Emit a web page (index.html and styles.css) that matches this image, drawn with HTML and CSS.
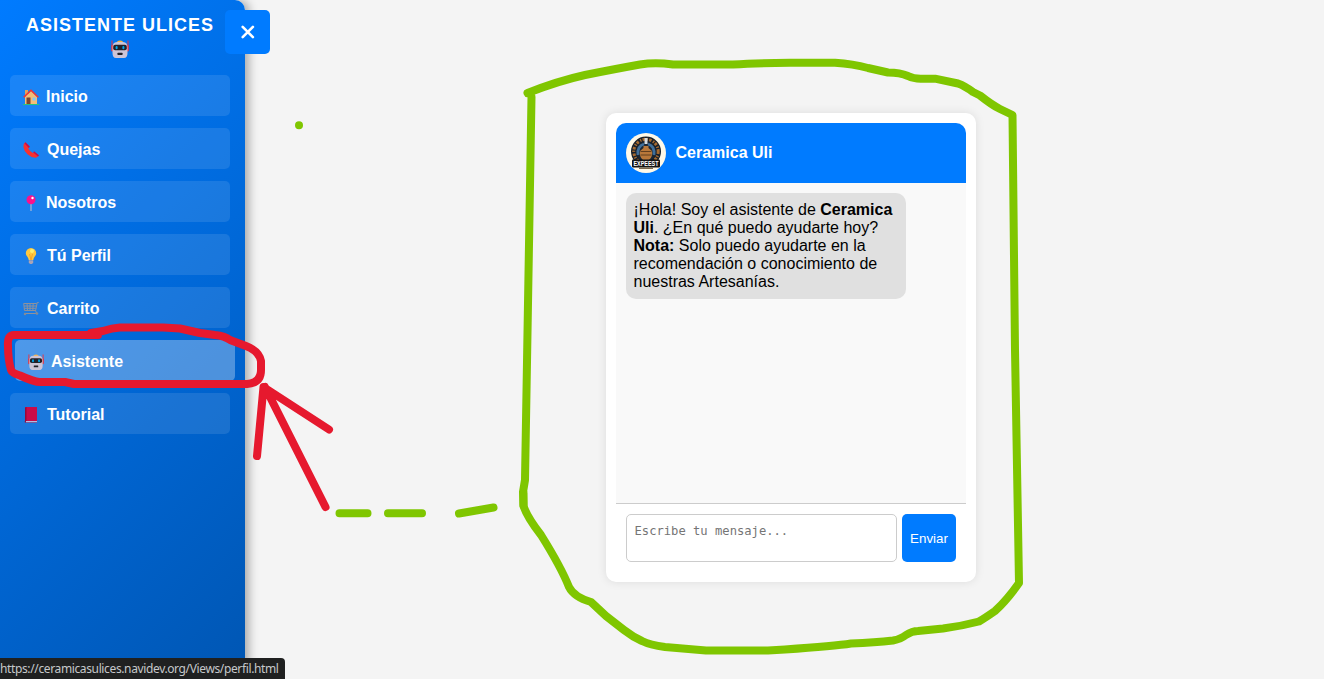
FILE: index.html
```html
<!DOCTYPE html>
<html lang="es">
<head>
<meta charset="utf-8">
<title>Asistente Ulices</title>
<link rel="stylesheet" href="styles.css">
</head>
<body>
<svg class="defs" width="0" height="0">
  <symbol id="robot" viewBox="0 0 18 18">
    <path d="M1 .5v6M17 .5v6" stroke="#f0303c" stroke-width="1"/>
    <rect x=".2" y="5" width="2" height="6.500" rx="1" fill="#e8353f"/><rect x="15.800" y="5" width="2" height="6.500" rx="1" fill="#e8353f"/>
    <path d="M6 2.500Q6 .5 9 .5t3 2z" fill="#f9b23c"/>
    <path d="M1.500 8Q1.300 2 6 2h6q4.700 0 4.500 6v5q0 5-3.500 5H5q-3.500 0-3.500-5z" fill="#cdc4d6"/>
    <rect x="2.200" y="4.800" width="13.600" height="5.400" rx="2" fill="#222028"/>
    <rect x="4.600" y="6" width="2" height="3.200" rx="1" fill="#00a6ed"/><rect x="11.400" y="6" width="2" height="3.200" rx="1" fill="#00a6ed"/>
    <rect x="6.500" y="12.800" width="5" height="2.200" rx=".5" fill="#222028"/>
  </symbol>
</svg>

<aside class="sidebar">
  <h2 class="title">ASISTENTE ULICES <svg class="title-icon"><use href="#robot"/></svg></h2>
  <nav class="menu">
    <a class="item"><svg class="icon" viewBox="0 0 16 16"><path d="M2 1h3v6H2z" fill="#e3a35a"/><path d="M2 8l6-6 6 6v7H2z" fill="#f3bd78"/><path d="M0 15h16v1H0z" fill="#26c281"/><path d="M.7 8.300 8 1.300l7.300 7" fill="none" stroke="#f8312f" stroke-width="1.500"/><path d="M3.500 8.500h4V15h-4z" fill="#7d4533"/><path d="M9.500 8.500h3v3h-3z" fill="#82c9f5"/></svg>Inicio</a>
    <a class="item item-wide"><svg class="icon" viewBox="0 0 16 16"><path d="M2.200 .3Q.2 1.500 .4 5 1 9 4.500 12.300 8.500 16 13 15.800L15.800 13.800 11.500 10 9.800 11Q6.500 9.200 5.200 6.300L6.500 5z" fill="#f8312f"/><path d="M2.500 .3 6.800 4.600 5.900 5.900 1.600 1.500zM11 9.300 16 13.300 15 14.500 10.300 10.600z" fill="#ca0b4a"/></svg>Quejas</a>
    <a class="item"><svg class="icon" viewBox="0 0 16 16"><path d="M7.500 8h1v8h-1z" fill="#c5bfcc"/><circle cx="8" cy="4.700" r="4.500" fill="#fc108b"/><circle cx="9.500" cy="3" r="1.200" fill="#fff"/></svg>Nosotros</a>
    <a class="item item-wide"><svg class="icon" viewBox="0 0 16 16"><path d="M8 0a5.200 5.200 0 0 0-5.200 5.200C2.800 8 5.500 9 5.700 12h4.600c.2-3 2.900-4 2.900-6.800A5.200 5.200 0 0 0 8 0z" fill="#ffc83d"/><path d="M6.500 6 8 12l1.500-6" fill="none" stroke="#f59b1f" stroke-width=".8"/><circle cx="9" cy="3" r="2" fill="#fff06b"/><path d="M5.800 12.300h4.400v2.500L9 16H7l-1.200-1.200z" fill="#aaa3b5"/></svg>Tú Perfil</a>
    <a class="item item-wide"><svg class="icon" viewBox="0 0 16 16"><path d="M15.700 1.500h-1.500L12.500 10M.7 2.500h13M.7 2.500 1.500 9.500h11.200M1 5h12.500M1.300 7.300h11.500M4 2.500l.5 7M7 2.500v7M10.200 2.500l-.4 7M12.700 10l1 2.500H1" fill="none" stroke="#8d929d"/><circle cx="2" cy="13" r="1.200" fill="#858b96"/><circle cx="14" cy="12.500" r="1.300" fill="#858b96"/></svg>Carrito</a>
    <a class="item active"><svg class="icon"><use href="#robot"/></svg>Asistente</a>
    <a class="item item-wide"><svg class="icon" viewBox="0 0 16 16"><path d="M2 1q0-1 1-1h11v14H3l-1 1z" fill="#ca0b4a"/><path d="M2 1q0-1 1.500-1v14L2 15z" fill="#990838"/><path d="M3 14.200h11v1.200H3z" fill="#d8cfe0"/><path d="M2 14.200q0 1.600 1 1.600h11" fill="none" stroke="#990838" stroke-width=".6"/></svg>Tutorial</a>
  </nav>
</aside>

<button class="close" aria-label="Cerrar"><svg width="14" height="14" viewBox="0 0 14 14"><path d="M1.700 1.900l10.200 10.200M11.900 1.900l-10.200 10.200" stroke="#fff" stroke-width="2.600" stroke-linecap="round"/></svg></button>

<main class="chat">
  <header class="chat-head">
    <svg class="logo" viewBox="0 0 40 40">
      <circle cx="20" cy="20" r="20" fill="#fff9e8"/>
      <circle cx="20" cy="18.500" r="15" fill="#17202b"/>
      <circle cx="20" cy="18.500" r="12.200" fill="none" stroke="#a66a30" stroke-width="3" stroke-dasharray="2.500 1.700 1.300 1.200"/>
      <circle cx="20" cy="18.500" r="9.800" fill="#1c2733"/>
      <path d="M12 22q-1-9 6-11M28 22q1-9-6-11" fill="none" stroke="#3f6f9b" stroke-width="2.800"/>
      <path d="M17.500 13h5v2l3.500 3q1 6-3 9h-6q-4-3-3-9l3.500-3z" fill="#b9783a"/>
      <path d="M14.500 18.500h11M14.500 22h11" stroke="#63401f"/>
      <path d="M18.500 5h3v6h-3z" fill="#d6dce1"/>
      <rect x="6" y="26.500" width="28" height="8" rx="1" fill="#151515"/>
      <path d="M13 35.300h14" stroke="#5d4526"/>
      <text x="20" y="32.800" class="logo-text" text-anchor="middle" textLength="25" lengthAdjust="spacingAndGlyphs">EXPEEST</text>
    </svg>
    <span>Ceramica Uli</span>
  </header>
  <section class="messages">
    <p class="bubble">¡Hola! Soy el asistente de <b>Ceramica Uli</b>. ¿En qué puedo ayudarte hoy?<br><b>Nota:</b> Solo puedo ayudarte en la recomendación o conocimiento de nuestras Artesanías.</p>
  </section>
  <footer class="composer">
    <textarea class="input" placeholder="Escribe tu mensaje..."></textarea>
    <button class="send">Enviar</button>
  </footer>
</main>

<div class="status">https://ceramicasulices.navidev.org/Views/perfil.html</div>

<svg class="ink" viewBox="0 0 1324 679">
  <g class="green">
    <path d="M299 125.300h.01M339.500 513.300h28M388 513.300h34M459 513.500l34.500-6"/>
    <path d="M527.500 93Q558 81 585 75 615 69 640 64.500 655 62 673 64.500H733Q755 63 790 62.800H835Q853 64 868 68L888 72.500Q900 72.500 908 76 914 79 922 78.700H935L958 83.500Q965 86 973 92L980 95.500Q992 105 1000 109L1012.500 115 1015 350 1019 583Q1007 600 995 611 985 618 979 621.500 962 626 943 628.500L918 631Q912 631 906 635 901 639 893 640.500 875 642.500 851 643.500 835 646 785 649.500L768 650.500H706L665 647Q650 645 642 641 633 637 624 630L606 616 591 602Q574 597 569 587 561 567 541 535 527 517 523.500 506L523 492 525 480 531.500 97"/>
    <path d="M523.500 493v12"/>
  </g>
  <g class="red">
    <path d="M98 335H14Q7 335 8 346 8 359 11 370 12 373 20 375.500 34 382 40 382H65L74 384H247Q261 383 261 370V361Q259 351 246 346L230 340Q225 336 215 335L200 333 180 328.500 163 327.500H120Q112 328 103 331L91 333"/>
    <path d="M257 456 263.500 387 329 429.500M265 387 325.500 507"/>
  </g>
</svg>
</body>
</html>
```
FILE: styles.css
```css
* { box-sizing: border-box; }

body {
  margin: 0;
  height: 679px;
  overflow: hidden;
  background: #f4f4f4;
  font-family: "Liberation Sans", Arial, sans-serif;
  font-size: 16px;
  display: flex;
  position: relative;
}

.defs { position: absolute; }

.sidebar {
  width: 245px;
  height: 679px;
  padding: 14px 15px 0 10px;
  color: #fff;
  background: linear-gradient(135deg, #007bff, #0056b3);
  border-top-right-radius: 10px;
  box-shadow: 4px 0 10px rgba(0, 0, 0, .3);
}

.title {
  margin: 0 0 14px;
  display: flex;
  flex-direction: column;
  align-items: center;
  font-size: 18px;
  line-height: 22px;
  letter-spacing: 1px;
  white-space: nowrap;
}

.title-icon { width: 18px; height: 18px; margin: 4px 1px 3px 0; }

.menu { display: flex; flex-direction: column; gap: 12px; }

.item {
  height: 41px;
  padding: 2px 0 0 13px;
  display: flex;
  align-items: center;
  gap: 7px;
  font-weight: bold;
  line-height: 18px;
  border-radius: 5px;
  background: rgba(255, 255, 255, .1);
}

.item-wide { gap: 8px; }
.icon { width: 16px; height: 16px; flex: none; }
.active { transform: translateX(5px); background: rgba(255, 255, 255, .3); }

.close {
  position: absolute;
  left: 225px;
  top: 10px;
  width: 45px;
  height: 44px;
  padding: 0;
  border: 0;
  border-radius: 5px;
  background: #007bff;
  display: flex;
  align-items: center;
  justify-content: center;
}

.chat {
  width: 370px;
  height: 469px;
  margin: 113px 0 0 361px;
  padding: 10px;
  background: #fff;
  border-radius: 10px;
  box-shadow: 0 0 10px rgba(0, 0, 0, .1);
}

.chat-head {
  height: 60px;
  padding: 10px;
  display: flex;
  align-items: center;
  gap: 9.500px;
  color: #fff;
  background: #007bff;
  font-weight: bold;
  border-radius: 10px 10px 0 0;
}

.logo { width: 40px; height: 40px; }
.logo-text { font: bold 6.500px "Liberation Sans", Arial, sans-serif; fill: #fff; }

.messages {
  height: 321px;
  padding: 10px;
  background: #f9f9f9;
  border-bottom: 1px solid #ccc;
}

.bubble {
  width: 280px;
  height: 106px;
  margin: 0;
  padding: 8px 7.500px;
  line-height: 18px;
  color: #000;
  background: #e0e0e0;
  border-radius: 10px;
}

.composer { display: flex; gap: 5px; padding: 10px; }

.input {
  width: 271px;
  height: 48px;
  padding: 8px 7.500px;
  resize: none;
  border: 1px solid #ccc;
  border-radius: 5px;
  font: 12.170px/16px "DejaVu Sans Mono", monospace;
}

.input::placeholder { color: #757575; }

.send {
  width: 54px;
  height: 48px;
  padding: 0;
  border: 0;
  border-radius: 5px;
  color: #fff;
  background: #007bff;
  font: 13.333px "Liberation Sans", Arial, sans-serif;
}

.status {
  position: absolute;
  left: 0;
  bottom: 0;
  width: 285px;
  height: 21px;
  color: #c6c8ca;
  background: #1f2020;
  border-top-right-radius: 4px;
  font: 12px/22px "Noto Sans", "Open Sans", sans-serif;
  letter-spacing: -.370px;
  white-space: nowrap;
}

.ink {
  position: absolute;
  left: 0;
  top: 0;
  width: 1324px;
  height: 679px;
  pointer-events: none;
  fill: none;
  stroke-width: 8;
  stroke-linecap: round;
  stroke-linejoin: round;
}

.green { stroke: #7fc600; }
.red { stroke: #e6192e; }
```
